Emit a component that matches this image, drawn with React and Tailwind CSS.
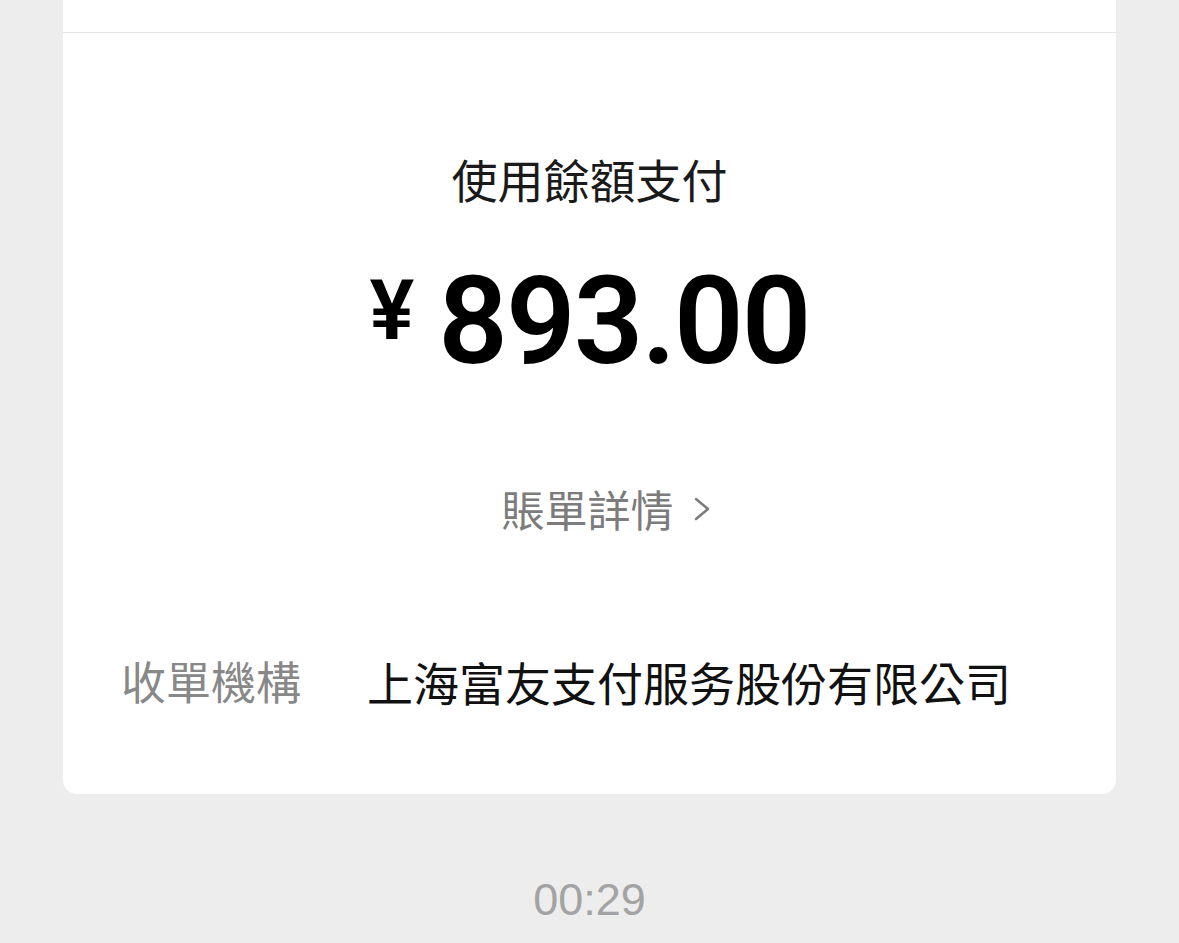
import React from "react";

const cjk = { fontFamily: '"Noto Sans CJK TC", "Noto Sans CJK SC", sans-serif' };

const PaymentResult = () => {
  return (
    <main className="min-h-screen w-full bg-[#ededed] px-[63px]">
      {/* Card */}
      <section className="flex flex-col rounded-b-[14px] bg-white">
        {/* upper part of card, cut off */}
        <div className="h-[33px] border-b border-[#e5e5e5]" />

        <div className="flex flex-col items-center pt-[122px]">
          <h1
            className="text-[46px] leading-[46px] font-normal text-[#1a1a1a]"
            style={cjk}
          >
            使用餘額支付
          </h1>

          <div className="mt-[60px] flex items-start font-['Roboto',sans-serif] text-black">
            <span className="mt-[8px] text-[84px] leading-none font-semibold">¥</span>
            <span className="ml-[24px] text-[122px] leading-none font-semibold tracking-[-2px]">
              893.00
            </span>
          </div>

          <button
            className="mt-[104px] ml-[32px] flex items-center text-[43px] leading-[43px] text-[#7c7c7c]"
            style={cjk}
          >
            賬單詳情
            <svg
              width="16"
              height="24"
              viewBox="0 0 16 24"
              className="ml-[20px]"
              fill="none"
              stroke="#7c7c7c"
              strokeWidth="2.5"
              strokeLinecap="round"
              strokeLinejoin="round"
            >
              <path d="M2 2l12 10L2 22" />
            </svg>
          </button>
        </div>

        {/* Row */}
        <div
          className="mt-[128px] mb-[90px] flex items-center pl-[58px] leading-[46px]"
          style={cjk}
        >
          <span className="w-[246px] text-[45px] text-[#888888]">收單機構</span>
          <span className="text-[46px] text-[#111111]">上海富友支付服务股份有限公司</span>
        </div>
      </section>

      <div className="mt-[83px] text-center font-['Liberation_Sans',sans-serif] text-[45px] leading-none text-[#a3a3a3]">
        00:29
      </div>
    </main>
  );
};

export default function App() {
  return <PaymentResult />;
}
